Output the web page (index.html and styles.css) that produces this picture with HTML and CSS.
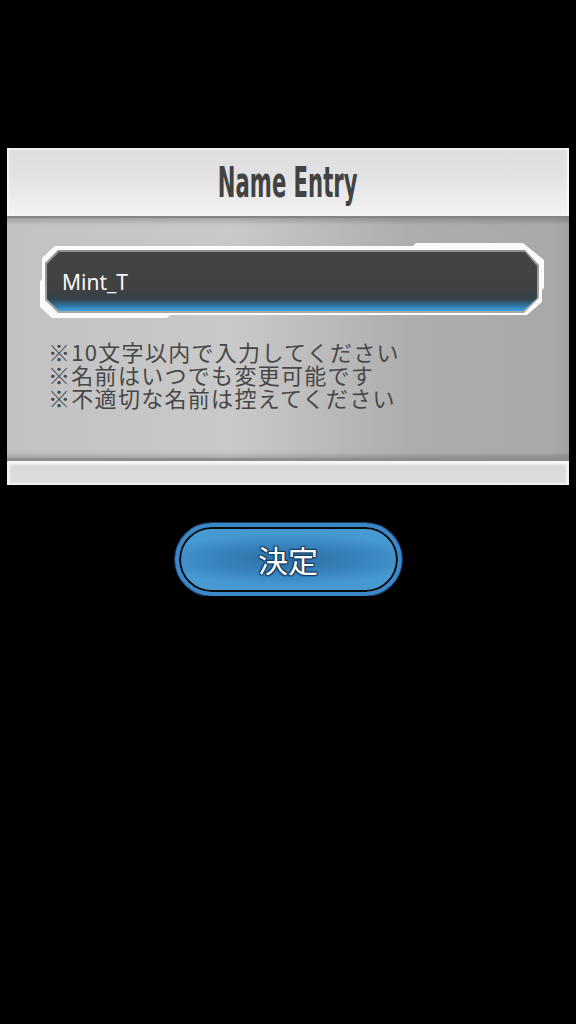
FILE: index.html
```html
<!doctype html>
<html><head>
<meta charset="utf-8">
<title>Name Entry</title>
<link rel="stylesheet" href="styles.css">
</head>
<body>

<div class="panel">
	<div class="panel-head"><span class="title">Name Entry</span></div>
	<div class="panel-body">
		<div class="field">
			<div class="field-edge">
				<div class="field-box">Mint_T</div>
			</div>
		</div>
		<p class="notes">※10文字以内で入力してください<br>
		※名前はいつでも変更可能です<br>
		※不適切な名前は控えてください</p>
	</div>
	<div class="panel-foot"></div>
</div>

<div class="actions">
	<div class="button"><span>決定</span></div>
</div>

</body></html>
```

FILE: styles.css
```css
body {
	margin: 0;
	background: #000;
	font-family: "Noto Sans CJK JP", "Noto Sans", sans-serif;
}
.panel {
	margin: 148px 0 0 7px;
	width: 562px;
}
.panel-head {
	height: 68px;
	display: flex;
	justify-content: center;
	align-items: center;
	background: linear-gradient(to bottom, #f6f6f6 0, #dedede 3px, #e2e2e2 40%, #efefef 85%, #f4f4f4 100%);
	box-shadow: inset 2px 0 2px #f8f8f8, inset -2px 0 2px #f8f8f8;
}
.title {
	display: inline-block;
	font-family: "DejaVu Sans Condensed", "DejaVu Sans", sans-serif;
	font-weight: bold;
	font-size: 42px;
	line-height: 42px;
	color: #424242;
	transform: scaleX(0.56);
	margin-top: 1px;
}
.panel-body {
	height: 242px;
	padding: 27px 0 0 33px;
	box-sizing: border-box;
	border-top: 2px solid #858585;
	background:
		linear-gradient(to bottom, rgba(0,0,0,0.18), rgba(0,0,0,0) 7px),
		linear-gradient(to top, rgba(0,0,0,0.16), rgba(0,0,0,0) 6px),
		linear-gradient(90deg, #c2c2c2 0%, #c9c9c9 40%, #adadad 72%, #a9a9a9 97%, #a2a2a2 100%);
}
.field {
	width: 504px;
	height: 75px;
	padding: 7px 0 0 5px;
	box-sizing: border-box;
	margin-top: -2px;
	background: #fbfbfb;
	clip-path: polygon(15px 3px, 373px 3px, 376px 0, 483px 0, 504px 17px, 504px 45px, 502px 47px, 502px 59px, 487px 72px, 130px 72px, 127px 75px, 12px 75px, 0 64px, 0 38px, 2px 36px, 2px 15px);
}
.field-edge {
	width: 494px;
	height: 63px;
	padding: 2px;
	box-sizing: border-box;
	background: linear-gradient(to bottom, #8e8e8e, #a8a8a8);
	clip-path: polygon(13px 0, 480px 0, 494px 15px, 494px 48px, 479px 63px, 13px 63px, 0 50px, 0 13px);
}
.field-box {
	height: 59px;
	padding-left: 15px;
	display: flex;
	align-items: center;
	font-family: "Noto Sans", sans-serif;
	font-size: 21px;
	color: #fafafa;
	background: linear-gradient(to bottom, #444 0, #414141 65%, #33414b 80%, #2f78a8 92%, #3fa4e2 100%);
	clip-path: polygon(12px 0, 478px 0, 490px 14px, 490px 46px, 476px 59px, 12px 59px, 0 47px, 0 12px);
}
.notes {
	margin: 22px 0 0 8px;
	font-size: 22px;
	line-height: 23px;
	letter-spacing: 1.3px;
	color: #474747;
}
.panel-foot {
	height: 27px;
	box-sizing: border-box;
	border-top: 3px solid #8e8e8e;
	background: linear-gradient(to bottom, #fafafa 0, #f6f6f6 2px, #dadada 5px, #dcdcdc 85%, #f2f2f2 100%);
	box-shadow: inset 3px 0 2px #f4f4f4, inset -3px 0 2px #f4f4f4;
}
.actions {
	display: flex;
	justify-content: center;
	margin-top: 38px;
}
.button {
	width: 227px;
	height: 73px;
	box-sizing: border-box;
	border: 4px solid #3b87cc;
	border-radius: 37px;
	display: flex;
	justify-content: center;
	align-items: center;
	background: radial-gradient(ellipse 60% 40% at center, #2e6ea2 0%, #3883bd 55%, #4799d1 100%);
	box-shadow: inset 0 0 0 2px #0a0a0a, 0 0 0 1px #1c3e60;
}
.button span {
	font-size: 30px;
	color: #fff;
	margin-top: -2px;
	text-shadow: 0 0 2px #173f63, 1px 1px 1px #173f63, -1px -1px 1px #173f63, 1px -1px 1px #173f63, -1px 1px 1px #173f63;
}
```
